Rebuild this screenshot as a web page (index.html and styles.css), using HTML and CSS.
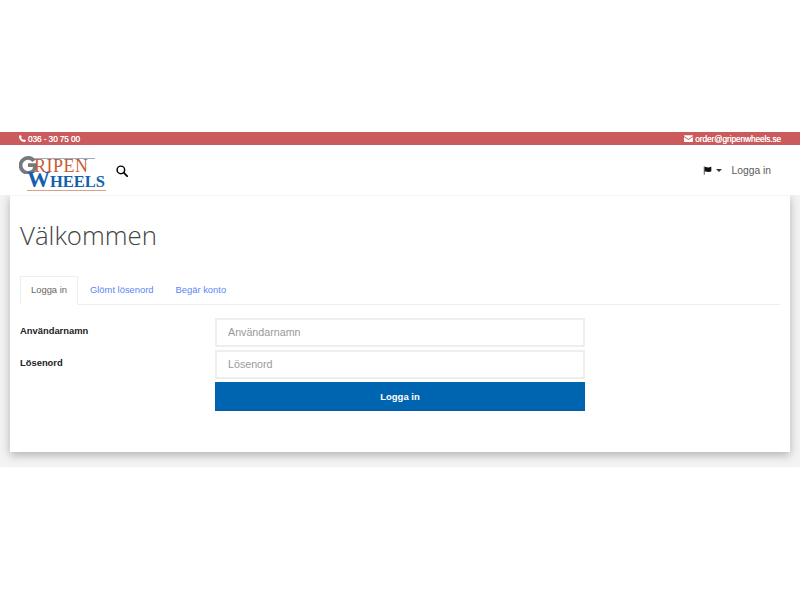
FILE: index.html
```html
<!DOCTYPE html>
<html lang="sv">
<head>
    <meta charset="UTF-8">
    <meta name="viewport" content="width=device-width, initial-scale=1.0">
    <title>Logga in</title>
    <link rel="stylesheet" href="styles.css">
</head>
<body>

    <div class="topbar">
        <span class="topbar-item">
            <svg class="topbar-icon" viewBox="0 0 16 16"><path d="M3.600 0 6.500 4.400 4.800 6.200c.8 2 2.600 3.900 4.800 5l1.800-1.600L16 12.400c-.3 2-1.800 3.600-4 3.600C6 16 0 9.600 0 4c0-2 1.500-3.700 3.600-4z"/></svg>
            036 - 30 75 00
        </span>
        <span class="topbar-item">
            <svg class="topbar-icon mail" viewBox="0 0 16 12"><path d="M1 0h14a1 1 0 0 1 1 1v.6L8 6.800 0 1.600V1a1 1 0 0 1 1-1z"/><path d="M0 3.400V11a1 1 0 0 0 1 1h14a1 1 0 0 0 1-1V3.400L8 8.600z"/></svg>
            order@gripenwheels.se
        </span>
    </div>

    <header class="navbar">
        <div class="nav-left">
            <div class="logo">
                <svg class="logo-g" viewBox="0 0 24 24"><path d="M20 6.500A10 10 0 1 0 21 17v-5h-9" fill="none" stroke="#77797c" stroke-width="5"/></svg>
                <div class="logo-gripen">RIPEN</div>
                <div class="logo-wheels"><span class="logo-w">W</span>HEELS</div>
            </div>
            <svg class="search-icon" viewBox="0 0 14 14"><circle cx="5.700" cy="5.700" r="4.400" fill="none" stroke="#000" stroke-width="1.700"/><path d="M9 9l4 4" stroke="#000" stroke-width="2" stroke-linecap="round"/></svg>
        </div>
        <div class="nav-right">
            <span class="lang">
                <svg class="flag" viewBox="0 0 12 10"><path d="M1 0h.8v10H1z"/><path d="M2 1c2-.8 3 .6 5 .3 1.200-.2 2-.5 3-.8v5.300c-1 .5-2 .9-3 1-2 .2-3-1-5-.3z"/></svg>
                <span class="caret"></span>
            </span>
            <a class="nav-link">Logga in</a>
        </div>
    </header>

    <main class="page">
        <div class="card">
            <h1>Välkommen</h1>

            <!-- Flikar -->
            <ul class="tabs">
                <li class="tab active">Logga in</li>
                <li class="tab">Glömt lösenord</li>
                <li class="tab">Begär konto</li>
            </ul>

            <form class="login-form">
                <div class="form-row">
                    <label class="form-label">Användarnamn</label>
                    <input class="form-input" type="text" placeholder="Användarnamn">
                </div>
                <div class="form-row">
                    <label class="form-label">Lösenord</label>
                    <input class="form-input" type="password" placeholder="Lösenord">
                </div>
                <div class="form-row">
                    <span class="form-label"></span>
                    <button class="form-button" type="button">Logga in</button>
                </div>
            </form>
        </div>
    </main>

</body>
</html>
```

FILE: styles.css
```css
* {
    box-sizing: border-box;
}

body {
    margin: 0;
    padding-top: 132px;
    background-color: #ffffff;
    font-family: "Liberation Sans", Arial, sans-serif;
    color: #333;
}

/* Toppraden */
.topbar {
    display: flex;
    justify-content: space-between;
    align-items: center;
    height: 13px;
    padding: 0 19px;
    background-color: #cb5a5c;
    color: #ffffff;
    font-size: 8.300px;
    letter-spacing: -0.1px;
    line-height: 14px;
    text-shadow: 0 0 0.3px #ffffff;
}

.topbar-item {
    display: flex;
    align-items: center;
    gap: 2px;
}

.topbar-icon {
    width: 7px;
    height: 7px;
    fill: #ffffff;
}

.topbar-icon.mail {
    width: 9px;
}

/* Navigering */
.navbar {
    display: flex;
    justify-content: space-between;
    align-items: center;
    height: 50px;
    padding: 0 29px 0 19px;
    background-color: #ffffff;
}

.nav-left {
    display: flex;
    align-items: center;
    gap: 9px;
}

.logo {
    position: relative;
    width: 88px;
    height: 36px;
    font-family: "Liberation Serif", "Times New Roman", serif;
}

.logo-g {
    position: absolute;
    left: 0;
    top: 4px;
    width: 18px;
    height: 18px;
}

.logo-gripen {
    position: absolute;
    left: 15px;
    top: 6px;
    width: 61px;
    border-top: 1px solid #8fb0cf;
    color: #cc5a32;
    font-size: 18px;
    letter-spacing: 0.5px;
    line-height: 14px;
}

.logo-wheels {
    position: absolute;
    left: 8px;
    top: 20px;
    width: 79px;
    border-bottom: 1px solid #d9a08a;
    color: #1460ad;
    font-size: 16.500px;
    font-weight: bold;
    line-height: 16px;
    white-space: nowrap;
}

.logo-w {
    font-size: 23px;
    line-height: 16px;
}

.search-icon {
    width: 12px;
    height: 12px;
    margin-top: 2px;
}

.nav-right {
    display: flex;
    align-items: center;
    gap: 9px;
    padding-top: 1px;
    font-size: 10.300px;
}

.lang {
    display: flex;
    align-items: center;
    gap: 3px;
}

.flag {
    width: 10px;
    height: 9px;
    fill: #111;
}

.caret {
    border-top: 3px solid #333;
    border-left: 3px solid transparent;
    border-right: 3px solid transparent;
}

.nav-link {
    color: #5a5a5a;
}

/* Innehåll */
.page {
    padding: 0 10px 15px;
    background-color: #f3f3f3;
}

.card {
    height: 257px;
    padding: 19px 10px 20px;
    border-top: 1px solid #f5f5f5;
    background-color: #ffffff;
    box-shadow: 0 3px 9px rgba(0, 0, 0, 0.28);
    clip-path: inset(0 -10px -15px -10px);
}

h1 {
    margin: 0 0 21px;
    font-family: "Open Sans", sans-serif;
    font-size: 25.800px;
    font-weight: 300;
    line-height: 40px;
    color: #444;
}

.tabs {
    display: flex;
    margin: 0 0 13px;
    padding: 0;
    list-style: none;
    border-bottom: 1px solid #eeeeee;
    font-size: 9.400px;
}

.tab {
    height: 29px;
    margin-bottom: -1px;
    padding: 0 10px;
    border: 1px solid transparent;
    line-height: 26px;
    color: #5c86f2;
}

.tab.active {
    margin-right: 1px;
    border-color: #eeeeee;
    border-bottom-color: #ffffff;
    color: #666;
}

.login-form {
    display: flex;
    flex-direction: column;
    gap: 3px;
}

.form-row {
    display: flex;
    align-items: flex-start;
}

.form-label {
    width: 195px;
    padding-top: 7px;
    font-size: 9.400px;
    font-weight: bold;
    line-height: 12px;
    color: #222;
}

.form-input {
    width: 370px;
    height: 29px;
    padding: 0 11px 1px;
    border: 2px solid #eeeeee;
    background-color: #ffffff;
    font-family: inherit;
    font-size: 10.700px;
    outline: none;
}

.form-input::placeholder {
    color: #999;
    opacity: 1;
}

.form-button {
    width: 370px;
    height: 29px;
    padding: 0;
    border: none;
    border-bottom: 1px solid #0f55a0;
    background-color: #0065b1;
    color: #ffffff;
    font-family: inherit;
    font-size: 9.500px;
    font-weight: bold;
}
```
